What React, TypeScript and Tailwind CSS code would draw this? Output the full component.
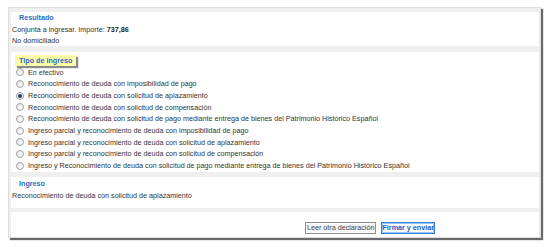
import React from "react";

const opciones = [
  "En efectivo",
  "Reconocimiento de deuda con imposibilidad de pago",
  "Reconocimiento de deuda con solicitud de aplazamiento",
  "Reconocimiento de deuda con solicitud de compensación",
  "Reconocimiento de deuda con solicitud de pago mediante entrega de bienes del Patrimonio Histórico Español",
  "Ingreso parcial y reconocimiento de deuda con imposibilidad de pago",
  "Ingreso parcial y reconocimiento de deuda con solicitud de aplazamiento",
  "Ingreso parcial y reconocimiento de deuda con solicitud de compensación",
  "Ingreso y Reconocimiento de deuda con solicitud de pago mediante entrega de bienes del Patrimonio Histórico Español",
];

const Radio: React.FC<{ checked?: boolean }> = ({ checked }) => (
  <span className="w-[8px] h-[8px] rounded-full border border-[#a0a0a0] bg-gradient-to-br from-[#e8e8e8] to-[#fafafa] flex items-center justify-center shrink-0">
    {checked && <span className="w-[4px] h-[4px] rounded-full bg-[#1f3f7a]" />}
  </span>
);

export default function App() {
  return (
    <div
      className="w-[549px] h-[247px] bg-white pt-[7px] pl-[8px] text-[#333] text-[7.2px] leading-[11.5px]"
      style={{ fontFamily: '"Liberation Sans", Arial, sans-serif' }}
    >
      <div className="w-[533px] h-[231px] bg-[#efefef] border border-[#dedede] shadow-[2px_2px_1px_#6a6a6a] pt-[4px] pl-[2px] pr-[1px] flex flex-col">
        <div className="bg-white h-[34px]">
          <div className="pl-[8px] font-bold text-[#2c6cc4]">Resultado</div>
          <div className="pl-[1px]">
            Conjunta a ingresar. Importe: <b className="text-[#222]">737,86</b>
          </div>
          <div className="pl-[1px]">No domiciliado</div>
        </div>

        <div className="bg-white h-[120px] mt-[6px] pt-[3px]">
          <div className="ml-[4px] inline-block bg-[#fbfba8] px-[4px] h-[11px] leading-[11px] font-bold text-[#2c6cc4] shadow-[2px_2px_1px_#8a8a8a]">
            Tipo de ingreso
          </div>
          <div className="flex flex-col">
            {opciones.map((o, i) => (
              <div key={i} className="flex items-center h-[11.7px] pl-[5px] gap-[4px]">
                <Radio checked={i === 2} />
                <span>{o}</span>
              </div>
            ))}
          </div>
        </div>

        <div className="bg-white h-[31px] mt-[5px] pt-[1px]">
          <div className="pl-[8px] font-bold text-[#2c6cc4]">Ingreso</div>
          <div className="pl-[1px]">Reconocimiento de deuda con solicitud de aplazamiento</div>
        </div>

        <div className="bg-white flex-1 mt-[4px] flex justify-end items-start pt-[10px] pr-[104px] gap-[5px]">
          <button className="h-[12px] px-[1px] leading-[10px] border border-[#8c8c8c] bg-[#f4f4f4] text-[#444] shadow-[inset_0_0_0_1px_#fff]">
            Leer otra declaración
          </button>
          <button className="h-[12px] px-0 leading-[10px] border border-[#3a7fd6] bg-white font-bold text-[#1a5cbf] shadow-[inset_0_0_0_1px_#9cc2ef]">
            Firmar y enviar
          </button>
        </div>
      </div>
    </div>
  );
}
